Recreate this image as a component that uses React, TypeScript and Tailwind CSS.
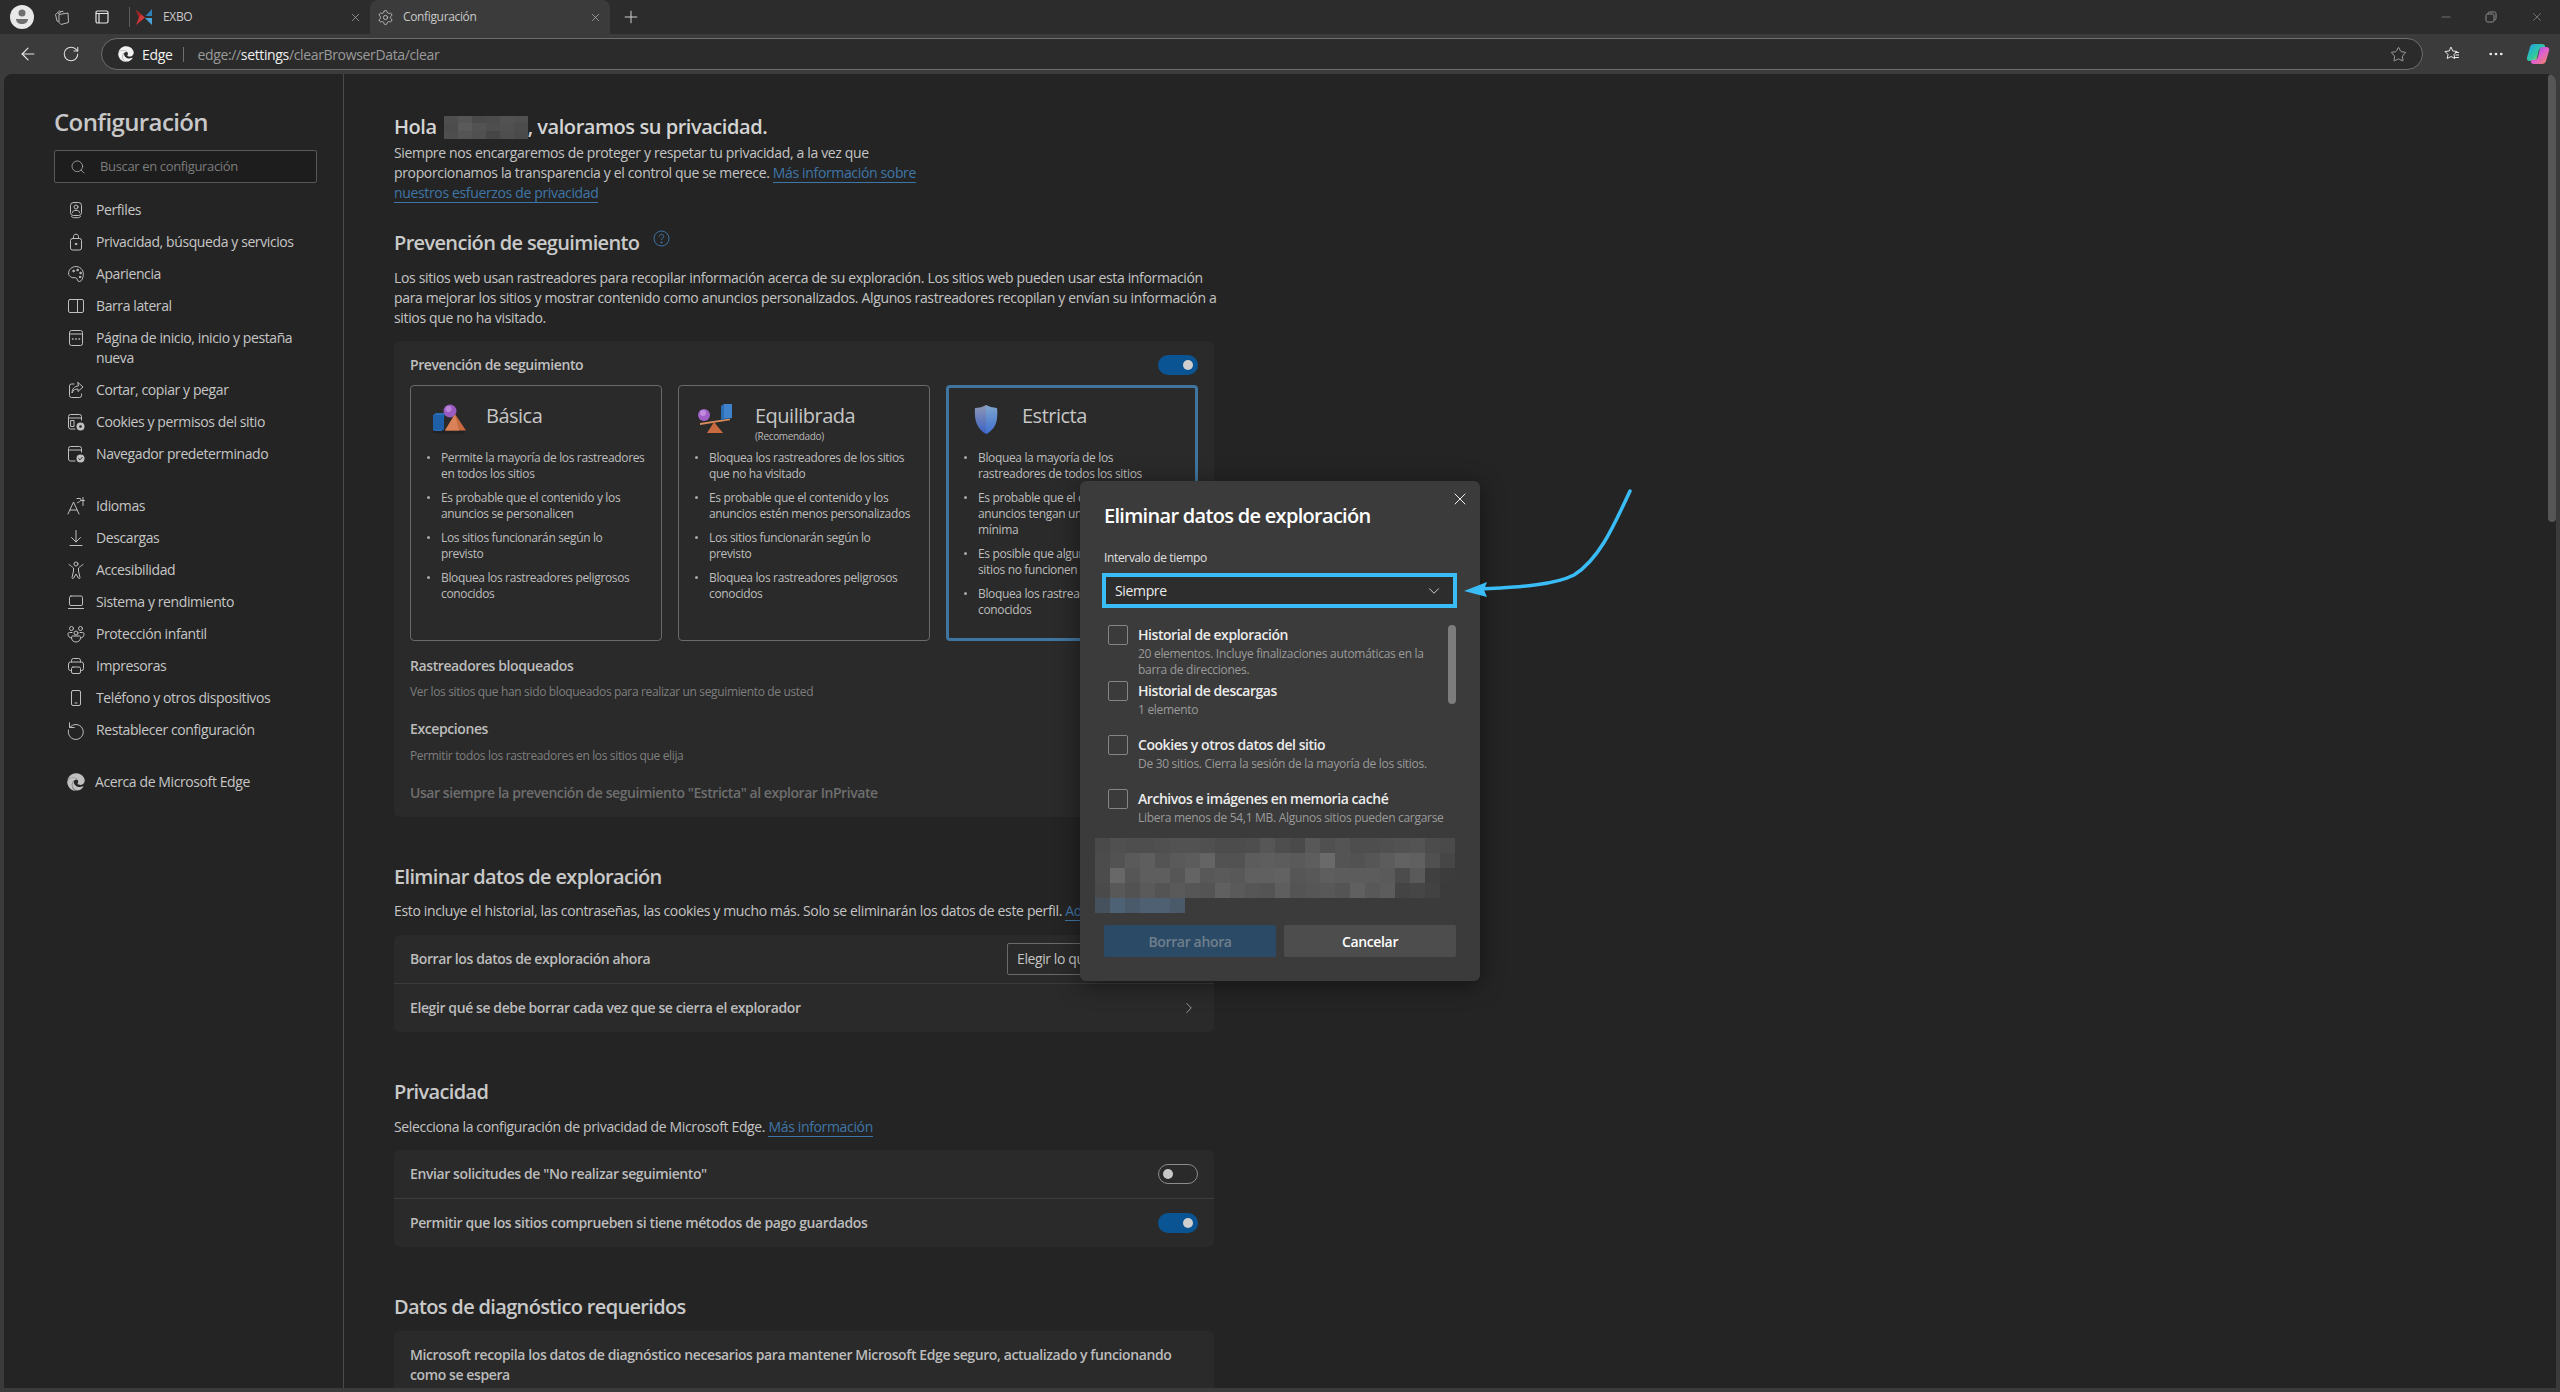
import React from "react";
import { FaEdge } from "react-icons/fa";
import { ArrowLeft, RotateCw, Star, MoreHorizontal, Minus, X, Plus, Settings, Search, ChevronDown, ChevronRight } from "lucide-react";

type P = { children: React.ReactNode; size?: number };
const Ic = ({ children, size = 20 }: P) => (
  <svg width={size} height={size} viewBox="0 0 20 20" fill="none" stroke="currentColor" strokeWidth="1" strokeLinecap="round" strokeLinejoin="round" className="shrink-0">
    {children}
  </svg>
);

const navTop: [React.ReactNode, React.ReactNode][] = [
  [<Ic><rect x="4.5" y="2.5" width="11" height="13" rx="3" /><circle cx="10" cy="7" r="2" /><path d="M6.5 12.5c0-1.2 1-2 2-2h3c1 0 2 .8 2 2M5.5 16.5c.8 1 1.6 1.2 3 1.2h3c1.4 0 2.2-.2 3-1.2" /></Ic>, "Perfiles"],
  [<Ic><rect x="4.5" y="6.5" width="11" height="11.5" rx="2" /><path d="M7.5 6.5V4.5c0-1.4 1-2.3 2.5-2.3s2.5.9 2.5 2.3v2" /><circle cx="10" cy="12" r=".8" fill="currentColor" /></Ic>, "Privacidad, búsqueda y servicios"],
  [<Ic><path d="M9.5 2.5c4.2-.3 7.8 3 7.8 7.2 0 3.6-1.3 7.8-4 7.8-2.3 0-1.6-2.6-3-3.5-1.5-1-3 .3-4.6-.6C3.6 12.5 2.3 11 2.6 8.8 3 5.2 6 2.7 9.5 2.5z" /><circle cx="7.5" cy="7" r=".8" fill="currentColor" /><circle cx="11.5" cy="6" r=".8" fill="currentColor" /><circle cx="14.5" cy="9" r=".8" fill="currentColor" /><circle cx="14" cy="13" r=".8" fill="currentColor" /></Ic>, "Apariencia"],
  [<Ic><rect x="2.5" y="3.5" width="15" height="13" rx="1.5" /><path d="M11.5 3.500v13" /></Ic>, "Barra lateral"],
];
const navTop2: [React.ReactNode, React.ReactNode][] = [
  [<Ic><path d="M3.5 4.5a2 2 0 0 1 2-2h9a2 2 0 0 1 2 2v11a2 2 0 0 1-2 2h-9a2 2 0 0 1-2-2z" /><path d="M3.5 6h13" /><path d="M6.5 11h.5M9.700 11h.5M13 11h.5" strokeWidth="1.5" /></Ic>, "Página de inicio, inicio y pestaña nueva"],
  [<Ic><path d="M8 4H5.5a2 2 0 0 0-2 2v9.500a2 2 0 0 0 2 2h8a2 2 0 0 0 2-2V14" /><path d="M12 2.5l5 4.500-5 4.500V9c-3 0-5 1-6 4 0-4 2.500-7 6-7z" /></Ic>, "Cortar, copiar y pegar"],
  [<Ic><path d="M9 17H4.500a2 2 0 0 1-2-2V4.500a2 2 0 0 1 2-2h9a2 2 0 0 1 2 2V8" /><path d="M2.500 6h13" /><rect x="5" y="8.500" width="3" height="6" /><circle cx="14.500" cy="14.500" r="4" fill="currentColor" stroke="none" /><circle cx="14.500" cy="14.500" r="1.300" fill="#242424" stroke="none" /></Ic>, "Cookies y permisos del sitio"],
  [<Ic><path d="M9 17H4.500a2 2 0 0 1-2-2V4.500a2 2 0 0 1 2-2h9a2 2 0 0 1 2 2V8" /><path d="M2.500 6h13" /><circle cx="14.500" cy="14.500" r="4" fill="currentColor" stroke="none" /><path d="M12.800 14.700l1.200 1.100 2.200-2.400" stroke="#242424" /></Ic>, "Navegador predeterminado"],
];
const navMid: [React.ReactNode, React.ReactNode][] = [
  [<Ic><path d="M2 18L7.500 6 13 18M4 14h7" /><path d="M11 2.500h3c.8 0 1 .5 1 1.200 0 1.500-2 2.300-3.500 3M17 1.500v8M15 4.500h3.500" /></Ic>, "Idiomas"],
  [<Ic><path d="M10 2.500v11.500M5.500 9.500L10 14l4.500-4.500M4 17.500h12" /></Ic>, "Descargas"],
  [<Ic><circle cx="10" cy="4" r="2" /><path d="M3 4.500c2 1.500 3.500 2.500 4.500 3.500v3L6 17.500c-.2 1 1 1.500 1.600.6L10 14l2.400 4.100c.6.900 1.800.4 1.600-.6L12.500 11V8c1-1 2.500-2 4.500-3.500" /></Ic>, "Accesibilidad"],
  [<Ic><rect x="3.500" y="4" width="13" height="9.500" rx="1.500" /><path d="M2.500 16.500h15" /></Ic>, "Sistema y rendimiento"],
  [<Ic><circle cx="5.500" cy="4.500" r="2" /><circle cx="14.500" cy="4.500" r="2" /><circle cx="10" cy="9" r="2" /><path d="M5.500 14c-2 0-3.500-1.500-3.500-4 0-1 .5-1.500 1.500-1.500H6M14.500 14c2 0 3.500-1.500 3.500-4 0-1-.5-1.500-1.500-1.500H14M5.500 13.500C5.500 16.500 7.500 18 10 18s4.500-1.500 4.500-4.500c0-1-.5-1.500-1-1.500h-7c-.5 0-1 .5-1 1.500z" /></Ic>, "Protección infantil"],
  [<Ic><path d="M5.500 6V4.500a2 2 0 0 1 2-2h5a2 2 0 0 1 2 2V6" /><path d="M5.500 14.500h-1a2 2 0 0 1-2-2V8a2 2 0 0 1 2-2h11a2 2 0 0 1 2 2v4.500a2 2 0 0 1-2 2h-1" /><rect x="5.500" y="11" width="9" height="6.500" rx="1.500" /></Ic>, "Impresoras"],
  [<Ic><rect x="5.500" y="2.500" width="9" height="15" rx="1.500" /><path d="M9 15h2" /></Ic>, "Teléfono y otros dispositivos"],
  [<Ic><path d="M3.500 2.800v4.700h4.700" /><path d="M3.700 7.500A7.500 7.500 0 1 1 2.500 10" /></Ic>, "Restablecer configuración"],
];

const NavRow = ({ icon, label }: { icon: React.ReactNode; label: React.ReactNode }) => (
  <div className="flex items-start gap-[10px] pl-[12px] py-[6px] text-[14px] leading-[20px] tracking-[-0.4px] text-[#c6c6c6]">
    <span className="text-[#c0c0c0]">{icon}</span>
    <span className="w-[210px]">{label}</span>
  </div>
);

const Toggle = ({ on }: { on: boolean }) =>
  on ? (
    <div className="w-[40px] h-[20px] rounded-full bg-[#0a5494] flex items-center justify-end pr-[5px] shrink-0">
      <div className="w-[10px] h-[10px] rounded-full bg-[#cfcfcf]" />
    </div>
  ) : (
    <div className="w-[40px] h-[20px] rounded-full border border-[#8c8c8c] flex items-center pl-[4px] shrink-0">
      <div className="w-[10px] h-[10px] rounded-full bg-[#c8c8c8]" />
    </div>
  );

const Bullets = ({ items, cls }: { items: string[]; cls: string }) => (
  <ul className={`flex flex-col gap-[8px] text-[12px] leading-[16px] text-[#bdbdbd] ${cls}`}>
    {items.map((t, i) => (
      <li key={i} className="flex">
        <span className="w-[3px] h-[3px] rounded-full bg-[#a8a8a8] mt-[6px] mr-[11px] shrink-0" />
        <span className="whitespace-pre-line">{t}</span>
      </li>
    ))}
  </ul>
);

const BasicIcon = () => (
  <svg width="36" height="32" viewBox="0 0 36 32" className="shrink-0">
    <ellipse cx="18" cy="30" rx="17" ry="2" fill="#222" />
    <path d="M2 13l3-2h9l-1 5-2 13H4l-2-1z" fill="#2c6eb5" />
    <path d="M2 13h11v15H3a1 1 0 0 1-1-1z" fill="#1f5fa8" />
    <path d="M24 12l11 16.500H14z" fill="#c96a3f" />
    <path d="M24 12l4 16.500H14z" fill="#d98257" />
    <circle cx="19" cy="9" r="6.500" fill="#9a5cc0" />
    <circle cx="17.500" cy="7" r="3" fill="#b985d8" />
  </svg>
);
const BalancedIcon = () => (
  <svg width="42" height="36" viewBox="0 0 42 36" className="shrink-0">
    <path d="M5 23l30-4.500v1.800L5 25z" fill="#d88a5c" />
    <path d="M19 22l9 11H12z" fill="#c96a3f" />
    <circle cx="9" cy="15" r="6" fill="#a160c6" />
    <circle cx="8" cy="13" r="3" fill="#c08ade" />
    <path d="M26 6l3-2h8v14l-11 2z" fill="#2c6eb5" />
    <path d="M29 4h8v14h-8z" fill="#3f83cc" />
  </svg>
);
const ShieldIcon = () => (
  <svg width="26" height="36" viewBox="0 0 26 36" className="shrink-0">
    <defs>
      <linearGradient id="sh" x1="0" y1="0" x2="0" y2="1">
        <stop offset="0" stopColor="#8f97b5" />
        <stop offset="1" stopColor="#3a62c4" />
      </linearGradient>
      <linearGradient id="sh2" x1="0" y1="0" x2="0" y2="1">
        <stop offset="0" stopColor="#7fa6cf" />
        <stop offset="1" stopColor="#3f6fd0" />
      </linearGradient>
    </defs>
    <path d="M2 6c4 0 8-1 11-3 3 2 7 3 11 3 1 12-1 21-11 26C4 27 1 18 2 6z" fill="url(#sh)" />
    <path d="M13 3c3 2 7 3 11 3 1 12-1 21-11 26z" fill="url(#sh2)" />
  </svg>
);

const blurRows: string[][] = [
  ["4a", "50", "4e", "4e", "50", "52", "52", "50", "4c", "4c", "4e", "56", "4e", "4a", "58", "50", "54", "4e", "4e", "50", "52", "54", "4c", "4a"],
  ["4c", "52", "5a", "5e", "54", "5a", "5c", "64", "52", "52", "5c", "5e", "5c", "5a", "5e", "6a", "54", "52", "56", "5c", "62", "60", "50", "46"],
  ["4c", "68", "56", "5e", "5e", "56", "64", "58", "5a", "58", "60", "60", "62", "56", "58", "5e", "5c", "5c", "5c", "5a", "4c", "5a", "40", "3c"],
  ["4a", "58", "52", "5a", "54", "5a", "56", "54", "60", "5a", "56", "54", "5e", "54", "56", "58", "54", "60", "58", "5c", "44", "46", "42", "3b"],
];
const blurTail = ["#45525e", "#4e6275", "#4a5a6a", "#4e6072", "#4e6072", "#4a5a68"];
const nameCells = ["4e", "55", "4a", "4c", "52", "50", "4c", "5a", "52", "4e", "50", "4c", "4e", "55", "50", "46", "4e", "4a"];

const CheckRow = ({ title, sub, cls }: { title: string; sub: string; cls: string }) => (
  <div className={`flex gap-[10px] ml-[4px] ${cls}`}>
    <div className="w-[20px] h-[20px] rounded-[2px] border border-[#858585] shrink-0" />
    <div>
      <div className="text-[14px] leading-[20px] font-semibold tracking-[-0.45px] text-[#ececec]">{title}</div>
      <div className="mt-[1px] text-[12px] leading-[16px] tracking-[-0.3px] text-[#9a9a9a] whitespace-pre-line">{sub}</div>
    </div>
  </div>
);

const H2 = ({ children, cls }: { children: React.ReactNode; cls: string }) => (
  <h2 className={`text-[20px] leading-[28px] font-semibold tracking-[-0.66px] text-[#c9c9c9] ${cls}`}>{children}</h2>
);
const A = ({ children }: { children: React.ReactNode }) => (
  <span className="text-[#3f76a8] border-b border-[#3f76a8]">{children}</span>
);

export default function App() {
  return (
    <div className="relative w-full h-[1392px] bg-[#3b3b3b] flex flex-col overflow-hidden [font-family:'Open_Sans','Noto_Sans',sans-serif] tracking-[-0.35px]">
      {/* tab strip */}
      <div className="h-[34px] bg-[#2c2c2c] flex items-center text-[12px] text-[#c8c8c8] shrink-0">
        <div className="ml-[10px] w-[24px] h-[24px] rounded-full bg-[#e8e8e8] flex items-center justify-center">
          <svg width="16" height="18" viewBox="0 0 16 18"><circle cx="8" cy="5" r="3.5" fill="#6f6f6f" /><path d="M2 11h12c0 3-2.500 5-6 5s-6-2-6-5z" fill="#6f6f6f" /></svg>
        </div>
        <svg className="ml-[19px] text-[#b8b8b8]" width="18" height="18" viewBox="0 0 18 18" fill="none" stroke="currentColor"><path d="M2.500 6.500l4-3.500 1.500 1M2.500 6.500L4 13l1.500.5M5 6l4-3 1.500 1" /><path d="M6 6.500l9-1.500.5 9.500L8 16.500 6 14.500z" /></svg>
        <svg className="ml-[23px] text-[#e6e6e6]" width="16" height="16" viewBox="0 0 16 16" fill="none" stroke="currentColor" strokeWidth="1.2"><rect x="2" y="2" width="12" height="12" rx="1.5" /><path d="M2 4.500h12M5 4.500V14" /></svg>
        <div className="ml-[19px] w-px h-[20px] bg-[#5c5c5c]" />
        <svg className="ml-[6px]" width="17" height="17" viewBox="0 0 17 17"><path d="M0 1l9 7.500L0 16l3-7.500z" fill="#d33636" /><path d="M0 1l5 4-2 3.500z" fill="#a02424" /><path d="M16 0v7H9.500z" fill="#2f7fb8" /><path d="M9 9h7v7z" fill="#4aa3d8" /></svg>
        <span className="ml-[10px] w-[186px]">EXBO</span>
        <X size={13} strokeWidth={1.2} className="text-[#b8b8b8]" />
        <div className="ml-[8px] w-[240px] h-[34px] bg-[#3b3b3b] rounded-t-lg flex items-center">
          <Settings size={17} strokeWidth={1.2} className="ml-[7px] text-[#c8c8c8]" />
          <span className="ml-[9px] w-[186px]">Configuración</span>
          <X size={13} strokeWidth={1.2} className="text-[#c0c0c0]" />
        </div>
        <Plus size={20} strokeWidth={1.2} className="ml-[11px] text-[#d0d0d0]" />
        <div className="flex-1" />
        <Minus size={14} strokeWidth={1.2} className="text-[#8c8c8c]" />
        <svg className="ml-[32px] text-[#8c8c8c]" width="12" height="12" viewBox="0 0 12 12" fill="none" stroke="currentColor"><rect x="1" y="3" width="8" height="8" rx="1.5" /><path d="M3 3V2.500A1.500 1.500 0 0 1 4.500 1h5A1.500 1.500 0 0 1 11 2.500v5A1.500 1.500 0 0 1 9.500 9H9" /></svg>
        <X size={14} strokeWidth={1.2} className="ml-[33px] mr-[16px] text-[#8c8c8c]" />
      </div>
      {/* toolbar */}
      <div className="h-[40px] bg-[#3b3b3b] flex items-center shrink-0">
        <ArrowLeft size={20} strokeWidth={1.4} className="ml-[18px] text-[#e8e8e8]" />
        <RotateCw size={18} strokeWidth={1.4} className="ml-[24px] text-[#e0e0e0]" />
        <div className="ml-[21px] h-[32px] w-[2322px] rounded-full bg-[#2b2b2b] border border-[#6e6e6e] flex items-center text-[14px]">
          <FaEdge size={16} className="ml-[16px] text-[#f2f2f2]" />
          <span className="ml-[8px] text-[#f2f2f2]">Edge</span>
          <div className="ml-[11px] w-px h-[15px] bg-[#6e6e6e]" />
          <span className="ml-[13px] text-[#9a9a9a]">edge://<span className="text-[#f0f0f0]">settings</span>/clearBrowserData/clear</span>
          <div className="flex-1" />
          <Star size={17} strokeWidth={1.2} className="mr-[15px] text-[#b0b0b0]" />
        </div>
        <svg className="ml-[20px] text-[#e8e8e8]" width="18" height="18" viewBox="0 0 18 18" fill="none" stroke="currentColor"><path d="M8 2l1.800 4 4.200.500-3 3 .8 4L8 11.500 4.200 13.500 5 9.500 2 6.500 6.200 6zM12 7.500h4M12.500 10h3.500M10.500 12.500H16" /></svg>
        <MoreHorizontal size={18} strokeWidth={1.6} className="ml-[26px] text-[#f0f0f0]" />
        <svg className="ml-[21px]" width="24" height="24" viewBox="0 0 24 24">
          <defs>
            <linearGradient id="c1" x1="0" y1="0" x2="1" y2="1"><stop offset="0" stopColor="#1f9df0" /><stop offset=".55" stopColor="#2fc9a0" /><stop offset="1" stopColor="#e8d03c" /></linearGradient>
            <linearGradient id="c2" x1="0" y1="0" x2="1" y2="1"><stop offset="0" stopColor="#6a5cf0" /><stop offset=".5" stopColor="#e060d0" /><stop offset="1" stopColor="#f08a50" /></linearGradient>
          </defs>
          <path d="M8 2h8c2 0 3 1 3 2v2h-3c-2 0-3 1-3.500 3L11 16c-.5 2-2 3-4 3H3.500C1.500 19 .5 17.500 1 15.500L4 5c.6-2 2-3 4-3z" fill="url(#c1)" />
          <path d="M16 5h4.500c2 0 3.200 1.500 2.600 3.500L20 19c-.6 2-2 3-4 3H8c-2 0-3-1-3-2v-2h3c2 0 3.400-1 4-3l1.500-7c.4-2 1-3 2.500-3z" fill="url(#c2)" />
        </svg>
      </div>
      {/* page */}
      <div className="flex-1 min-h-0 px-[4px] pb-[4px]">
        <div className="relative h-full rounded-t-lg bg-[#242424] flex overflow-hidden">
          <aside className="w-[340px] h-full border-r border-[#4a4a4a] pl-[50px] pt-[32px] shrink-0">
            <h1 className="text-[24px] leading-[32px] font-semibold tracking-[-0.6px] text-[#c8c8c8]">Configuración</h1>
            <div className="mt-[12px] w-[263px] h-[33px] bg-[#1d1d1d] border border-[#585858] rounded-[2px] flex items-center text-[13px] text-[#7c7c7c]">
              <Search size={16} strokeWidth={1.2} className="ml-[15px] text-[#b0b0b0]" />
              <span className="ml-[14px]">Buscar en configuración</span>
            </div>
            <nav className="mt-[11px]">
              {navTop.map(([i, l], k) => <NavRow key={k} icon={i} label={l} />)}
              {navTop2.map(([i, l], k) => <NavRow key={k} icon={i} label={l} />)}
              <div className="h-[20px]" />
              {navMid.map(([i, l], k) => <NavRow key={k} icon={i} label={l} />)}
              <div className="h-[20px]" />
              <NavRow icon={<FaEdge size={18} className="ml-px mt-px text-[#c0c0c0]" />} label="Acerca de Microsoft Edge" />
            </nav>
          </aside>
          <main className="flex-1 pl-[50px] pt-[39px] overflow-hidden">
            <div className="w-[820px] text-[14px] leading-[20px] text-[#c4c4c4]">
              <h1 className="text-[20px] leading-[28px] font-semibold tracking-[-0.45px] text-[#d4d4d4] flex items-center">
                Hola
                <span className="ml-[7px] w-[84px] h-[23px] grid grid-cols-6 overflow-hidden">
                  {nameCells.map((c, i) => <span key={i} style={{ backgroundColor: `#${c}${c}${c}` }} />)}
                </span>
                , valoramos su privacidad.
              </h1>
              <p className="mt-[2px] whitespace-nowrap">
                Siempre nos encargaremos de proteger y respetar tu privacidad, a la vez que<br />
                proporcionamos la transparencia y el control que se merece. <A>Más información sobre</A><br />
                <A>nuestros esfuerzos de privacidad</A>
              </p>
              <div className="mt-[26px] flex items-start">
                <H2 cls="">Prevención de seguimiento</H2>
                <svg className="ml-[14px] mt-[1px] text-[#3f76a8]" width="17" height="17" viewBox="0 0 17 17" fill="none" stroke="currentColor"><circle cx="8.500" cy="8.500" r="7.500" /><path d="M6.300 6.500c0-1.300 1-2.200 2.200-2.200s2.200.9 2.200 2.100c0 1.600-2.200 1.800-2.200 3.600" /><circle cx="8.500" cy="12.500" r=".6" fill="currentColor" /></svg>
              </div>
              <p className="mt-[11px] whitespace-nowrap">
                Los sitios web usan rastreadores para recopilar información acerca de su exploración. Los sitios web pueden usar esta información<br />
                para mejorar los sitios y mostrar contenido como anuncios personalizados. Algunos rastreadores recopilan y envían su información a<br />
                sitios que no ha visitado.
              </p>
              <section className="mt-[13px] h-[476px] bg-[#2a2a2a] rounded-md px-[16px] pt-[14px]">
                <div className="flex items-center justify-between h-[20px] font-semibold tracking-[-0.4px] text-[#c0c0c0]">
                  Prevención de seguimiento <Toggle on />
                </div>
                <div className="mt-[10px] grid grid-cols-3 gap-[16px]">
                  <div className="h-[256px] border border-[#6a6a6a] rounded-[4px]">
                    <div className="h-[64px] flex items-start pl-[20px] pt-[16px]">
                      <BasicIcon />
                      <span className="ml-[19px] text-[20px] leading-[28px] font-medium tracking-[-0.5px] text-[#c6c6c6]">Básica</span>
                    </div>
                    <Bullets cls="pl-[16px]" items={["Permite la mayoría de los rastreadores\nen todos los sitios", "Es probable que el contenido y los\nanuncios se personalicen", "Los sitios funcionarán según lo\nprevisto", "Bloquea los rastreadores peligrosos\nconocidos"]} />
                  </div>
                  <div className="h-[256px] border border-[#6a6a6a] rounded-[4px]">
                    <div className="h-[64px] flex items-start pl-[16px] pt-[14px]">
                      <BalancedIcon />
                      <div className="ml-[18px] pt-[2px]">
                        <div className="text-[20px] leading-[28px] font-medium tracking-[-0.5px] text-[#c6c6c6]">Equilibrada</div>
                        <div className="text-[10px] leading-[12px] text-[#b8b8b8]">(Recomendado)</div>
                      </div>
                    </div>
                    <Bullets cls="pl-[16px]" items={["Bloquea los rastreadores de los sitios\nque no ha visitado", "Es probable que el contenido y los\nanuncios estén menos personalizados", "Los sitios funcionarán según lo\nprevisto", "Bloquea los rastreadores peligrosos\nconocidos"]} />
                  </div>
                  <div className="h-[256px] border-[3px] border-[#3f759f] rounded-[4px]">
                    <div className="h-[62px] flex items-start pl-[24px] pt-[14px]">
                      <ShieldIcon />
                      <span className="ml-[23px] text-[20px] leading-[28px] font-medium tracking-[-0.5px] text-[#c6c6c6]">Estricta</span>
                    </div>
                    <Bullets cls="pl-[15px]" items={["Bloquea la mayoría de los\nrastreadores de todos los sitios", "Es probable que el contenido y los\nanuncios tengan una personalización\nmínima", "Es posible que algunas partes de los\nsitios no funcionen", "Bloquea los rastreadores peligrosos\nconocidos"]} />
                  </div>
                </div>
                <div className="mt-[15px] font-semibold tracking-[-0.4px] text-[#bcbcbc]">Rastreadores bloqueados</div>
                <div className="mt-[8px] text-[12px] leading-[16px] text-[#7e7e7e]">Ver los sitios que han sido bloqueados para realizar un seguimiento de usted</div>
                <div className="mt-[19px] font-semibold tracking-[-0.4px] text-[#bcbcbc]">Excepciones</div>
                <div className="mt-[9px] text-[12px] leading-[16px] text-[#7e7e7e]">Permitir todos los rastreadores en los sitios que elija</div>
                <div className="mt-[19px] font-semibold tracking-[-0.44px] text-[#6e6e6e]">Usar siempre la prevención de seguimiento "Estricta" al explorar InPrivate</div>
              </section>

              <H2 cls="mt-[46px]">Eliminar datos de exploración</H2>
              <p className="mt-[10px] whitespace-nowrap">
                Esto incluye el historial, las contraseñas, las cookies y mucho más. Solo se eliminarán los datos de este perfil. <A>Administrar sus datos</A>
              </p>
              <section className="mt-[14px] bg-[#2a2a2a] rounded-md font-semibold tracking-[-0.4px] text-[#bcbcbc]">
                <div className="h-[48px] px-[16px] flex items-center justify-between border-b border-[#3c3c3c] box-content">
                  Borrar los datos de exploración ahora
                  <div className="w-[191px] h-[32px] border border-[#6a6a6a] rounded-[2px] flex items-center pl-[9px] font-normal text-[#c4c4c4]">Elegir lo que se debe borrar</div>
                </div>
                <div className="h-[48px] px-[16px] flex items-center justify-between">
                  Elegir qué se debe borrar cada vez que se cierra el explorador
                  <ChevronRight size={18} strokeWidth={1.2} className="text-[#a8a8a8]" />
                </div>
              </section>

              <H2 cls="mt-[46px]">Privacidad</H2>
              <p className="mt-[11px]">Selecciona la configuración de privacidad de Microsoft Edge. <A>Más información</A></p>
              <section className="mt-[13px] bg-[#2a2a2a] rounded-md font-semibold tracking-[-0.4px] text-[#bcbcbc]">
                <div className="h-[48px] px-[16px] flex items-center justify-between border-b border-[#3c3c3c] box-content">
                  Enviar solicitudes de "No realizar seguimiento" <Toggle on={false} />
                </div>
                <div className="h-[48px] px-[16px] flex items-center justify-between">
                  Permitir que los sitios comprueben si tiene métodos de pago guardados <Toggle on />
                </div>
              </section>

              <H2 cls="mt-[46px]">Datos de diagnóstico requeridos</H2>
              <section className="mt-[10px] bg-[#2a2a2a] rounded-md font-semibold tracking-[-0.4px] text-[#bcbcbc] p-[16px] pt-[14px]">
                Microsoft recopila los datos de diagnóstico necesarios para mantener Microsoft Edge seguro, actualizado y funcionando<br />como se espera
              </section>
            </div>
          </main>
          <div className="absolute right-0 top-0 w-[8px] h-[448px] rounded-full bg-[#565656]" />
        </div>
      </div>

      {/* dialog */}
      <div className="absolute left-[1080px] top-[481px] w-[400px] h-[500px] bg-[#3b3b3b] rounded-md shadow-[0_4px_24px_rgba(0,0,0,0.45)] px-[24px] pt-[21px]">
        <X size={20} strokeWidth={1.2} className="absolute right-[10px] top-[8px] text-[#f0f0f0]" />
        <div className="text-[20px] leading-[28px] font-semibold tracking-[-0.7px] text-white whitespace-nowrap">Eliminar datos de exploración</div>
        <div className="mt-[20px] text-[12px] leading-[16px] text-[#e0e0e0]">Intervalo de tiempo</div>
        <div className="mt-[7px] -ml-[2px] w-[355px] h-[35px] border-[4px] border-[#3abcf6] bg-[#2d2d2d] flex items-center justify-between pl-[9px] pr-[10px] text-[14px] text-[#ececec]">
          Siempre <ChevronDown size={18} strokeWidth={1.2} className="text-[#e0e0e0]" />
        </div>
        <div className="relative mt-[17px] h-[213px]">
          <div className="absolute right-[0px] top-0 w-[8px] h-[79px] rounded-full bg-[#7c7c7c]" />
          <CheckRow cls="" title="Historial de exploración" sub={"20 elementos. Incluye finalizaciones automáticas en la\nbarra de direcciones."} />
          <CheckRow cls="mt-[3px]" title="Historial de descargas" sub="1 elemento" />
          <CheckRow cls="mt-[17px]" title="Cookies y otros datos del sitio" sub="De 30 sitios. Cierra la sesión de la mayoría de los sitios." />
          <CheckRow cls="mt-[17px]" title="Archivos e imágenes en memoria caché" sub="Libera menos de 54,1 MB. Algunos sitios pueden cargarse" />
        </div>
        <div className="-ml-[9px] w-[360px] flex flex-col">
          {blurRows.map((r, i) => (
            <div key={i} className="flex h-[15px]">
              {r.map((c, j) => <span key={j} className="w-[15px] h-[15px]" style={{ backgroundColor: `#${c}${c}${c}` }} />)}
            </div>
          ))}
          <div className="flex h-[15px]">
            {blurTail.map((c, j) => <span key={j} className="w-[15px] h-[15px]" style={{ backgroundColor: c }} />)}
          </div>
        </div>
        <div className="mt-[12px] grid grid-cols-2 gap-[8px] text-[14px] font-semibold">
          <div className="h-[32px] bg-[#2b4a66] text-[#6f7f8c] rounded-[2px] flex items-center justify-center">Borrar ahora</div>
          <div className="h-[32px] bg-[#4d4d4d] text-white rounded-[2px] flex items-center justify-center">Cancelar</div>
        </div>
      </div>

      {/* annotation arrow */}
      <svg className="absolute left-0 top-0 pointer-events-none" width="2560" height="1392">
        <path d="M1630 491C1612 530 1598 560 1574 575C1552 586 1515 587 1480 589" fill="none" stroke="#3abcf6" strokeWidth="3.5" strokeLinecap="round" />
        <path d="M1464 591L1487 582L1484 590L1487 597Z" fill="#3abcf6" />
      </svg>
    </div>
  );
}
